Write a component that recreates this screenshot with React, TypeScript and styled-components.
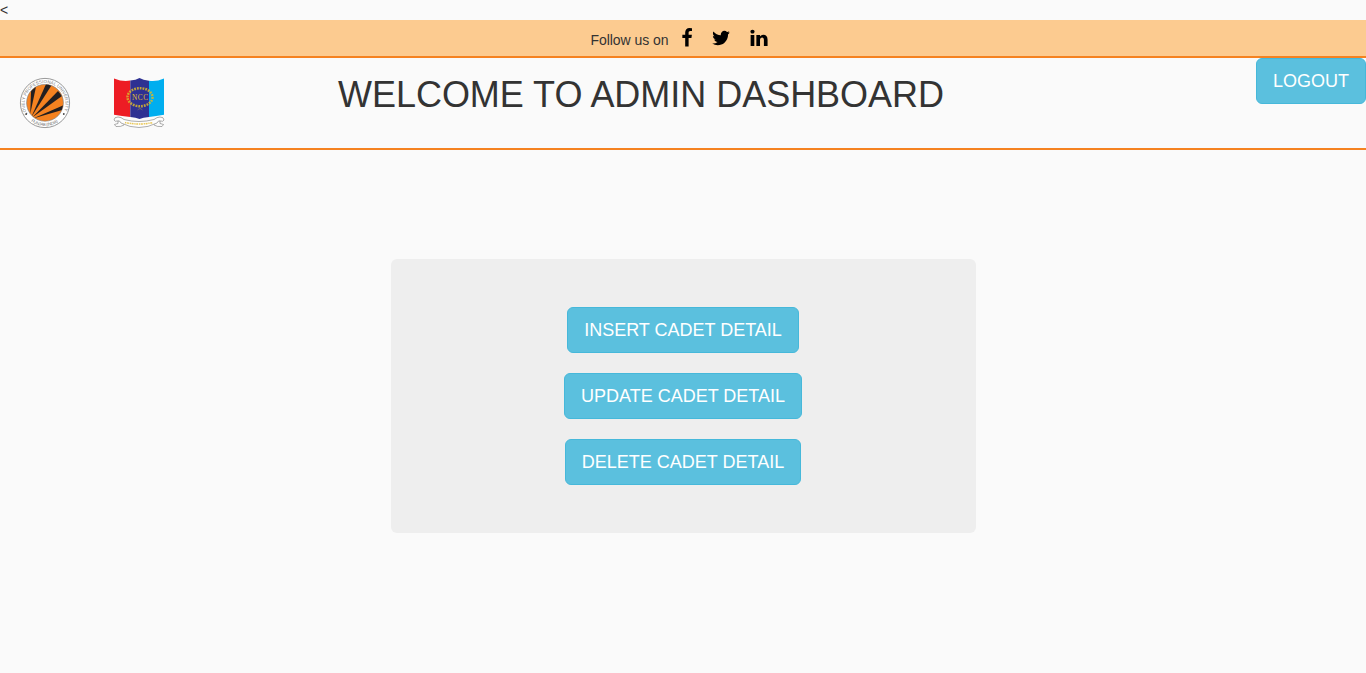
import React from 'react';
import styled, { createGlobalStyle } from 'styled-components';

const GlobalStyle = createGlobalStyle`
  *, *::before, *::after { box-sizing: border-box; }
  body {
    margin: 0;
    background: #fafafa;
    color: #333;
    font: 14px/20px "Liberation Sans", Arial, sans-serif;
  }
`;

const StrayText = styled.div`
  height: 20px;
`;

const SocialBar = styled.div`
  display: flex;
  height: 38px;
  padding-left: 590.4px;
  background: #fccb90;
  border-bottom: 2px solid #f58220;
`;

const FollowLabel = styled.span`
  width: 86px;
  padding-top: 10px;
  letter-spacing: -0.03px;
  white-space: nowrap;
`;

const SocialLink = styled.a<{ $gap?: number }>`
  display: block;
  width: 20px;
  height: 20px;
  margin-top: 8px;
  margin-left: ${({ $gap = 0 }) => $gap}px;
  color: #000;
`;

const SocialIcon = styled.svg`
  display: block;
  width: 20px;
  height: 20px;
  fill: currentColor;
`;

const Header = styled.header`
  display: flex;
  align-items: flex-start;
  height: 92px;
  border-bottom: 2px solid #f58220;
`;

const Logos = styled.div`
  display: flex;
  gap: 40px;
  width: 338px;
  padding: 18px 0 0 18px;
`;

const Logo = styled.svg`
  display: block;
  width: 54px;
  height: 54px;
`;

const Title = styled.h1`
  flex: 1;
  margin: 17px 0 0;
  font-size: 36px;
  line-height: 39px;
  font-weight: 400;
  letter-spacing: -0.03px;
  white-space: nowrap;
`;

const Button = styled.button`
  height: 46px;
  padding: 10px 16px;
  border: 1px solid #46b8da;
  border-radius: 6px;
  background: #5bc0de;
  color: #fff;
  font: 18px/24px "Liberation Sans", Arial, sans-serif;
  white-space: nowrap;
  cursor: pointer;
`;

const Panel = styled.main`
  display: flex;
  flex-direction: column;
  align-items: center;
  gap: 20px;
  width: 585px;
  height: 274px;
  margin: 109px 0 0 391px;
  padding: 48px 1px 0 0;
  border-radius: 6px;
  background: #eee;
`;

const socials = [
  {
    name: 'Facebook',
    gap: 0.6,
    d: 'M1343 12v264h-157q-86 0-116 36t-30 108v189h293l-39 296h-254v759h-306v-759h-255v-296h255v-218q0-186 104-288.5t277-102.5q147 0 228 12z',
  },
  {
    name: 'Twitter',
    gap: 14.4,
    d: 'M1684 408q-67 98-162 167 1 14 1 42 0 130-38 259.5t-115.5 248.5-184.5 210.5-258 146-323 54.5q-271 0-496-145 35 4 78 4 225 0 401-138-105-2-188-64.5t-114-159.5q33 5 61 5 43 0 85-11-112-23-185.5-111.5t-73.5-205.5v-4q68 38 146 41-66-44-105-115t-39-154q0-88 44-163 121 149 294.5 238.5t371.5 99.5q-8-38-8-74 0-134 94.5-228.5t228.5-94.5q140 0 236 102 109-21 205-78-37 115-142 178 93-10 186-50z',
  },
  {
    name: 'LinkedIn',
    gap: 17.8,
    d: 'M477 625v991h-330v-991h330zm21-306q1 73-50.5 122t-135.5 49h-2q-82 0-132-49t-50-122q0-74 51.5-122.5t134.5-48.5 133 48.5 51 122.5zm1166 729v568h-329v-530q0-105-40.5-164.5t-126.5-59.5q-63 0-105.5 34.5t-63.5 85.5q-11 30-11 81v553h-329q2-399 2-647t-1-296l-1-48h329v144h-2q20-32 41-56t56.5-52 87-43.5 114.5-15.5q171 0 275 113.5t104 332.5z',
  },
];

/* Round university seal: black rays fanning out from the lower left of an orange disc. */
const UniversitySeal = () => (
  <Logo viewBox="0 0 54 54" aria-label="University seal">
    <defs>
      <clipPath id="disc">
        <circle cx="27" cy="26.8" r="18.2" />
      </clipPath>
      <path id="upper-arc" d="M9.5 38A20.4 20.4 0 1 1 44.5 38" />
      <path id="lower-arc" d="M13 45.3A23 23 0 0 0 41 45.3" />
    </defs>
    <circle cx="27" cy="27" r="24.6" fill="#fff" stroke="#8c8c8c" strokeWidth="0.9" />
    <g fill="#777" fontFamily="Liberation Sans, sans-serif" fontSize="4.4">
      <text>
        <textPath href="#upper-arc" textLength="82">LOVELY PROFESSIONAL UNIVERSITY</textPath>
      </text>
      <text>
        <textPath href="#lower-arc" textLength="29">PUNJAB (INDIA)</textPath>
      </text>
    </g>
    <circle cx="8.2" cy="38" r="0.9" fill="#444" />
    <circle cx="45.8" cy="38" r="0.9" fill="#444" />
    <circle cx="27" cy="26.8" r="18.4" fill="#f58220" stroke="#777" strokeWidth="0.6" />
    <g clipPath="url(#disc)" fill="#231f20">
      <path d="M12.2 38L13.2 11l5.4-3z" />
      <path d="M13.3 41L28.5 7h6.5z" />
      <path d="M14.2 41.5L40 15l4 5z" />
      <path d="M15 42.5L46 29v4.5z" />
    </g>
  </Logo>
);

/* Tricolour shield with a gold wreath above a white motto ribbon. */
const CadetCrest = () => (
  <Logo viewBox="0 0 54 54" aria-label="NCC crest">
    <path d="M2 2.5Q11 6.2 18.3 4.6V41Q10 40 2 38.8z" fill="#ed1c24" />
    <path d="M18.3 4.6Q24 4 27.5 2Q31 4 37 4.7V41Q31 41.6 27.5 43Q24 41.6 18.3 41z" fill="#2e3192" />
    <path d="M37 4.7Q44 6 52 2.5V38.8Q44 40 37 41z" fill="#00aeef" />
    <ellipse cx="28" cy="21.2" rx="12.5" ry="9" fill="none" stroke="#d8b72c" strokeWidth="2.5" strokeDasharray="1.8 1" opacity="0.85" />
    <path d="M25.5 31l5 3M30.5 31l-5 3" stroke="#746b69" strokeWidth="0.7" />
    <text x="28" y="23.5" textAnchor="middle" fill="#e3c12c" fontFamily="Liberation Serif, serif" fontSize="7.2" textLength="16">NCC</text>
    <g fill="#fdfdfd" stroke="#777" strokeWidth="0.6" strokeLinejoin="round">
      <path d="M6 44v3.5l-3.5 1l1.5 2q5 .5 8-1.5V44z" />
      <path d="M48 44v3.5l3.5 1l-1.5 2q-5 .5-8-1.5V44z" />
      <path d="M9 47q-1-3-4-2q-2 1-3-1q0-3 4-3q3 0 6 2.5q15 4 30 0q3-2.5 6-2.5q4 0 4 3q-1 2-3 1q-3-1-4 2q-18 9-36 0z" />
    </g>
    <path d="M13 46.5q14 3 28 0" fill="none" stroke="#e9c85a" strokeWidth="1.5" strokeDasharray="1.3 .6 2 .8" />
  </Logo>
);

export default function App() {
  return (
    <>
      <GlobalStyle />
      <StrayText>&lt;</StrayText>
      <SocialBar>
        <FollowLabel>Follow us on</FollowLabel>
        {socials.map(({ name, gap, d }) => (
          <SocialLink key={name} $gap={gap} aria-label={name}>
            <SocialIcon viewBox="0 0 1792 1792">
              <path d={d} />
            </SocialIcon>
          </SocialLink>
        ))}
      </SocialBar>
      <Header>
        <Logos>
          <UniversitySeal />
          <CadetCrest />
        </Logos>
        <Title>WELCOME TO ADMIN DASHBOARD</Title>
        <Button>LOGOUT</Button>
      </Header>
      <Panel>
        <Button>INSERT CADET DETAIL</Button>
        <Button>UPDATE CADET DETAIL</Button>
        <Button>DELETE CADET DETAIL</Button>
      </Panel>
    </>
  );
}
